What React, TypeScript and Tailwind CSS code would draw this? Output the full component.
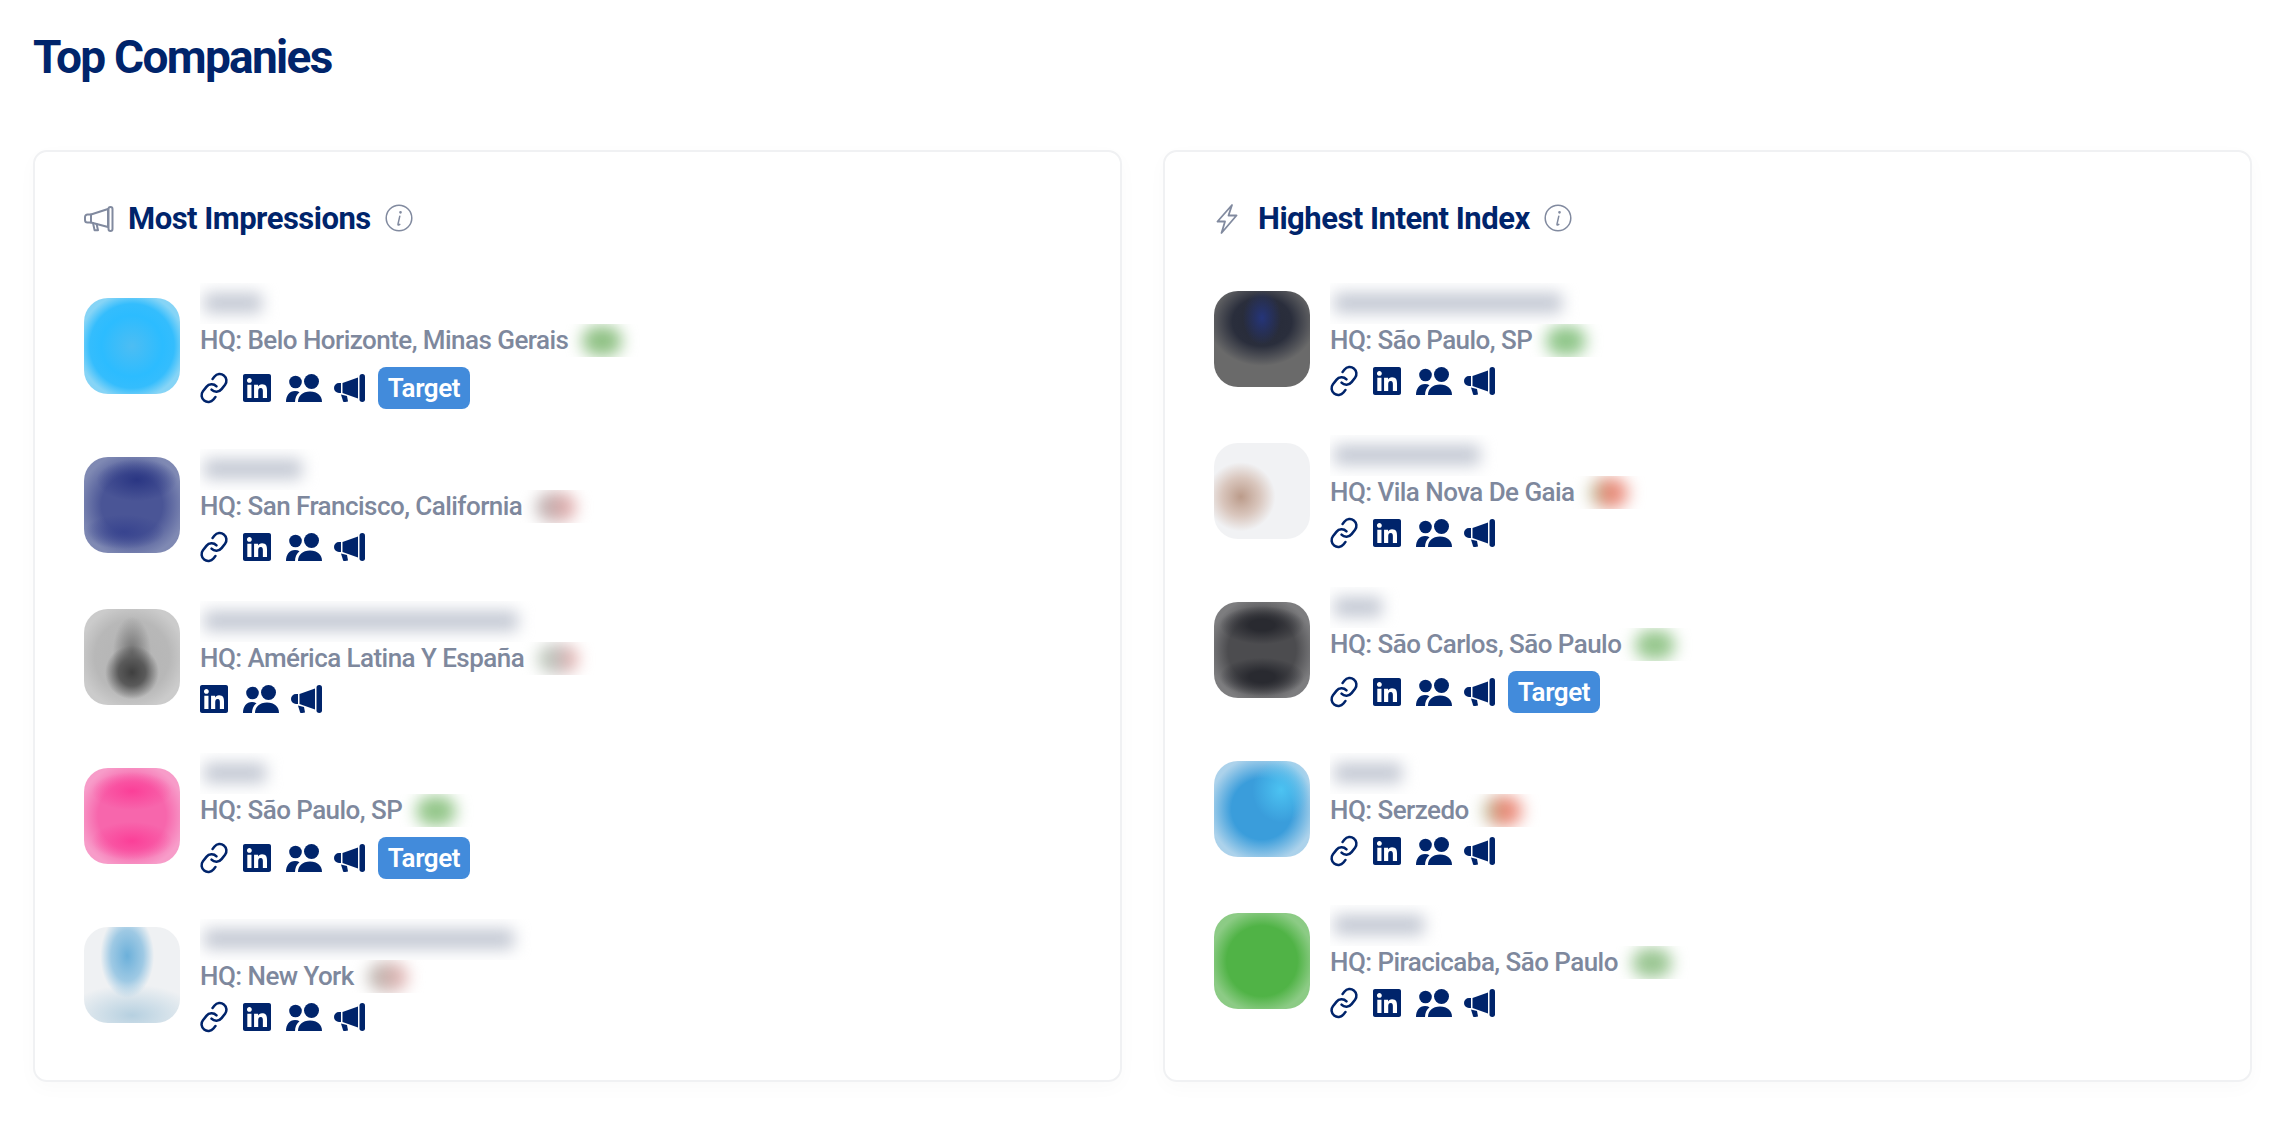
import React from 'react';
import { FaLinkedin } from 'react-icons/fa';
import { Link as LinkIcon } from 'lucide-react';

type Company = {
  hq: string;
  avatar: string;
  nameWidth: string;
  flag: string;
  website?: boolean;
  target?: boolean;
};

const impressions: Company[] = [
  {
    hq: 'Belo Horizonte, Minas Gerais',
    nameWidth: 'w-[58px]',
    flag: 'bg-[#8fc184]',
    website: true,
    target: true,
    avatar: 'bg-[radial-gradient(ellipse_at_50%_50%,#4dbdf3_0%,#2cbcff_45%,#34bdfd_62%,#86d4f6_78%)]',
  },
  {
    hq: 'San Francisco, California',
    nameWidth: 'w-[98px]',
    flag: 'bg-[linear-gradient(90deg,#b5b1b1,#e9a9a9)]',
    website: true,
    avatar: 'bg-[radial-gradient(ellipse_42%_22%_at_55%_24%,#2a3683_0%,transparent_100%),radial-gradient(ellipse_42%_18%_at_42%_78%,#38448f_0%,transparent_100%),radial-gradient(ellipse_at_50%_50%,#4a5596_0%,#4a5596_45%,#7f89b3_78%)]',
  },
  {
    hq: 'América Latina Y España',
    nameWidth: 'w-[314px]',
    flag: 'bg-[linear-gradient(90deg,#b7c9b4,#c4c0c0,#efa5a2)]',
    avatar: 'bg-[radial-gradient(ellipse_28%_28%_at_50%_66%,#3f3f3f_0%,#5a5a5a_50%,transparent_100%),radial-gradient(ellipse_20%_38%_at_50%_46%,#707070_0%,transparent_100%),radial-gradient(ellipse_at_50%_50%,#b4b4b4_0%,#b8b8b8_55%,#cbcbcb_78%)]',
  },
  {
    hq: 'São Paulo, SP',
    nameWidth: 'w-[62px]',
    flag: 'bg-[#93c689]',
    website: true,
    target: true,
    avatar: 'bg-[radial-gradient(ellipse_42%_20%_at_50%_24%,#fb3f98_0%,transparent_100%),radial-gradient(ellipse_42%_20%_at_50%_76%,#fb3f98_0%,transparent_100%),radial-gradient(ellipse_at_50%_50%,#f766ac_0%,#f766ac_50%,#f79cc9_78%)]',
  },
  {
    hq: 'New York',
    nameWidth: 'w-[310px]',
    flag: 'bg-[linear-gradient(90deg,#b4b4ad,#e9b3b3)]',
    website: true,
    avatar: 'bg-[#eff1f3] bg-[radial-gradient(ellipse_28%_44%_at_45%_30%,#6cb0da_0%,#9ec9e4_60%,transparent_100%),radial-gradient(ellipse_70%_32%_at_50%_92%,#b6d0e0_0%,transparent_100%)]',
  },
];

const intent: Company[] = [
  {
    hq: 'São Paulo, SP',
    nameWidth: 'w-[228px]',
    flag: 'bg-[#8fc689]',
    website: true,
    avatar: 'bg-[#6a6a6a] bg-[radial-gradient(ellipse_20%_28%_at_50%_28%,#25357a_0%,transparent_100%),radial-gradient(ellipse_56%_46%_at_50%_32%,#262a38_0%,#2a2e3c_55%,transparent_100%)]',
  },
  {
    hq: 'Vila Nova De Gaia',
    nameWidth: 'w-[146px]',
    flag: 'bg-[linear-gradient(90deg,#b9d4ae,#e77f6c,#f0a79c)]',
    website: true,
    avatar: 'bg-[#f1f2f4] bg-[radial-gradient(ellipse_36%_36%_at_28%_56%,#bb9b8a_0%,#d9c6bd_55%,transparent_100%)]',
  },
  {
    hq: 'São Carlos, São Paulo',
    nameWidth: 'w-[48px]',
    flag: 'bg-[#96c78d]',
    website: true,
    target: true,
    avatar: 'bg-[radial-gradient(ellipse_44%_20%_at_50%_24%,#292a30_0%,#292a30_30%,transparent_100%),radial-gradient(ellipse_44%_20%_at_50%_78%,#292a30_0%,#292a30_30%,transparent_100%),radial-gradient(ellipse_at_50%_50%,#4c4c4f_0%,#4c4c4f_50%,#7d7d7f_78%)]',
  },
  {
    hq: 'Serzedo',
    nameWidth: 'w-[68px]',
    flag: 'bg-[linear-gradient(90deg,#b4d0a8,#e8806c,#f1a49a)]',
    website: true,
    avatar: 'bg-[radial-gradient(ellipse_30%_34%_at_70%_30%,#4cc3f2_0%,transparent_100%),radial-gradient(ellipse_at_50%_50%,#3a9ddb_0%,#3a9ddb_45%,#acd2eb_78%)]',
  },
  {
    hq: 'Piracicaba, São Paulo',
    nameWidth: 'w-[90px]',
    flag: 'bg-[#9ac692]',
    website: true,
    avatar: 'bg-[radial-gradient(ellipse_at_50%_50%,#50b346_0%,#50b346_52%,#8ccb85_76%)]',
  },
];

const BullhornOutline = () => (
  <svg viewBox="0 0 30 26" className="h-[26px] w-[30px] shrink-0 fill-none stroke-[#818a9f] stroke-[2]" strokeLinejoin="round" strokeLinecap="round">
    <path d="M7 8.500 24 3v18L7 16.500z" />
    <path d="M3.500 8.500H7v8H3.500A2.500 2.500 0 0 1 1 14v-3a2.500 2.500 0 0 1 2.500-2.500z" />
    <path d="M9 17l1.600 7.200h3.400L12.600 18" />
    <rect x="24.500" y="1" width="4" height="24" rx="2" />
  </svg>
);

const BoltOutline = () => (
  <svg viewBox="0 0 22 30" className="h-[30px] w-[22px] shrink-0 fill-none stroke-[#818a9f] stroke-[1.8]" strokeLinejoin="round">
    <path d="M16 1 1.500 17.500H9L5.500 29 20.500 11.500H12.500z" />
  </svg>
);

const InfoIcon = () => (
  <svg viewBox="0 0 28 28" className="h-[28px] w-[28px] shrink-0 fill-none stroke-[#818a9f]" strokeLinecap="round">
    <circle cx="14" cy="14" r="12.800" strokeWidth="1.500" />
    <path d="M14.800 12.200 13 20.200c-.2.9.8 1 1.800.2" strokeWidth="1.500" />
    <circle cx="15.500" cy="8.300" r=".7" strokeWidth="1.300" />
  </svg>
);

const UsersIcon = () => (
  <svg viewBox="0 0 36 28" className="mr-[12px] h-[28px] w-[36px] shrink-0 fill-current">
    <circle cx="9.500" cy="8" r="6.300" />
    <circle cx="25.500" cy="7.500" r="7.500" />
    <path d="M0 28c0-6.500 3.500-11 9-11 1.800 0 3.300.4 4.500 1.200C10.500 20.500 9 24 9 28z" />
    <path d="M12 28c0-6 4.500-10.500 12-10.500S36 22 36 28z" />
  </svg>
);

const BullhornIcon = () => (
  <svg viewBox="0 0 31 28" className="h-[28px] w-[31px] shrink-0 fill-current">
    <path d="M5 9h2v10H5a5 5 0 0 1 0-10z" />
    <path d="M8.500 9 24 3.500v21L8.500 19z" />
    <rect x="25.500" y="0" width="5.500" height="28" rx="2.700" />
    <path d="M7 20.500 13 22l1 5.500c-1.500.6-3.500.6-4.800.2z" />
  </svg>
);

const CompanyRow = ({ company }: { company: Company }) => (
  <div className="flex items-center gap-[20px]">
    <div className={`h-[96px] w-[96px] shrink-0 rounded-[24px] ${company.avatar}`} />
    <div className="min-w-0">
      <div className="h-[41px] w-fit overflow-hidden pl-[4px] pr-[28px] pt-[10px]">
        <div className={`h-[20px] rounded bg-[#c3c8d3] blur-[8px] ${company.nameWidth}`} />
      </div>
      <div className="flex h-[33px] items-center text-[26px] font-medium leading-[33px] tracking-[-0.55px] text-[#7e889d]">
        <span>HQ: {company.hq}</span>
        <div className="-ml-[8px] flex h-[33px] w-[84px] items-center justify-center overflow-hidden">
          <div className={`h-[30px] w-[40px] rounded-full blur-[8px] ${company.flag}`} />
        </div>
      </div>
      <div className="mt-[10px] flex items-center text-[#00246b]">
        {company.website && <LinkIcon className="-my-[3px] -ml-[2px] mr-[13px] h-[32px] w-[32px] shrink-0 -rotate-[7deg]" strokeWidth={1.9} />}
        <FaLinkedin className="-my-[2px] mr-[15px] h-[32px] w-[28px] shrink-0" />
        <UsersIcon />
        <BullhornIcon />
        {company.target && (
          <span className="ml-[13px] flex h-[42px] w-[92px] items-center justify-center rounded-[8px] bg-[#428bdb] text-[26px] font-semibold tracking-[-0.4px] text-white">
            Target
          </span>
        )}
      </div>
    </div>
  </div>
);

const Card = ({ icon, title, companies }: { icon: React.ReactNode; title: string; companies: Company[] }) => (
  <section className="rounded-[14px] border-2 border-[#f0f1f3] bg-white px-[49px] pb-[49px] pt-[51px] shadow-[0_6px_20px_rgba(0,0,0,0.025)]">
    <div className="mb-[48px] flex h-[32px] items-center">
      <div className="flex w-[44px] shrink-0 items-center">{icon}</div>
      <h2 className="mr-[14px] text-[31px] font-bold tracking-[-0.5px] text-[#00246b]">{title}</h2>
      <div className="-mt-[2px]">
        <InfoIcon />
      </div>
    </div>
    <div className="flex flex-col gap-[40px]">
      {companies.map((company, index) => (
        <CompanyRow key={index} company={company} />
      ))}
    </div>
  </section>
);

export default function App() {
  return (
    <div className="min-h-[1122px] bg-white pl-[33px] pr-[32px] pt-[29px] font-['Roboto',sans-serif]">
      <h1 className="mb-[65px] h-[56px] text-[46px] font-bold leading-[56px] tracking-[-1.7px] text-[#00246b]">Top Companies</h1>
      <div className="grid grid-cols-2 gap-[41px]">
        <Card icon={<BullhornOutline />} title="Most Impressions" companies={impressions} />
        <Card
          icon={<div className="ml-[2px]"><BoltOutline /></div>}
          title="Highest Intent Index"
          companies={intent}
        />
      </div>
    </div>
  );
}
